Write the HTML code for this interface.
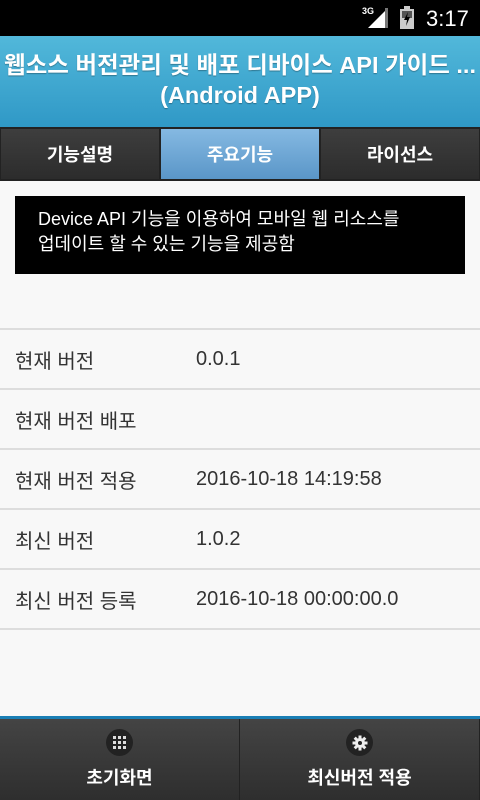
<!DOCTYPE html><html><head><meta charset="utf-8"><style>
*{margin:0;padding:0;box-sizing:border-box}
body{width:480px;height:800px;overflow:hidden;background:#f8f8f8;font-family:"Liberation Sans","Noto Sans CJK KR",sans-serif;position:relative}
.sb{height:36px;background:#000;color:#fff;position:relative}
.hd{position:absolute;top:36px;left:0;width:480px;height:92px;background:linear-gradient(#52b8da,#2f98c6);color:#fff;text-align:center;font-weight:bold;font-size:23.5px;line-height:30px;padding-top:14px;white-space:nowrap;text-shadow:0 1px 1px rgba(0,0,0,.3)}
.tabs{position:absolute;top:127px;left:0;width:480px;height:54px;background:#222;display:flex;padding:2px 0 2px 0}
.tab{flex:1;display:flex;align-items:center;justify-content:center;color:#fff;font-weight:bold;font-size:18px;background:linear-gradient(#3e3e3e,#2c2c2c);margin:0 1px}
.tab.a{background:linear-gradient(#85b9e2,#5a96c8);color:#fff}
.box{position:absolute;top:196px;left:15px;width:450px;height:78px;background:#000;color:#fff;font-size:18px;line-height:25px;padding:11px 23px}
.rows{position:absolute;top:328px;left:0;width:480px;border-top:2px solid #ddd}
.row{height:60px;border-bottom:2px solid #ddd;display:flex;align-items:center;font-size:20px;color:#333}
.row span:first-child{width:196px;padding-left:15px}
.ft{position:absolute;top:716px;left:0;width:480px;height:84px;border-top:3px solid #1a7fb5;background:#222;display:flex}
.fb{flex:1;background:linear-gradient(#444,#2e2e2e);margin-right:1px;display:flex;flex-direction:column;align-items:center;color:#fff;font-weight:bold;font-size:18px}
.ic{width:27px;height:27px;border-radius:50%;background:#222;margin-top:10px;margin-bottom:8px;display:flex;align-items:center;justify-content:center}
</style></head><body>
<div class="sb">
<span style="position:absolute;left:362px;top:6px;font-size:9px;font-weight:bold">3G</span>
<svg style="position:absolute;left:368px;top:8px" width="20" height="20"><polygon points="20,0 20,20 0,20" fill="#fff"/><rect x="17" y="0" width="3" height="20" fill="#777"/></svg>
<svg style="position:absolute;left:400px;top:6px" width="14" height="23"><rect x="4" y="0" width="6" height="3" fill="#ccc"/><rect x="0" y="3" width="14" height="20" fill="#ccc"/><rect x="2" y="5" width="10" height="7" fill="#555"/><polygon points="8,6 4,14 7,14 6,20 10,11 7,11" fill="#000"/></svg>
<span style="position:absolute;left:426px;top:6px;font-size:22px">3:17</span>
</div>
<div class="hd">웹소스 버전관리 및 배포 디바이스 API 가이드 ...<br>(Android APP)</div>
<div class="tabs"><div class="tab">기능설명</div><div class="tab a">주요기능</div><div class="tab">라이선스</div></div>
<div class="box">Device API 기능을 이용하여 모바일 웹 리소스를<br>업데이트 할 수 있는 기능을 제공함</div>
<div class="rows">
<div class="row"><span>현재 버전</span><span>0.0.1</span></div>
<div class="row"><span>현재 버전 배포</span><span></span></div>
<div class="row"><span>현재 버전 적용</span><span>2016-10-18 14:19:58</span></div>
<div class="row"><span>최신 버전</span><span>1.0.2</span></div>
<div class="row"><span>최신 버전 등록</span><span>2016-10-18 00:00:00.0</span></div>
</div>
<div class="ft">
<div class="fb"><div class="ic"><svg width="13" height="13" fill="#ddd"><rect x="0" y="0" width="3" height="3"/><rect x="5" y="0" width="3" height="3"/><rect x="10" y="0" width="3" height="3"/><rect x="0" y="5" width="3" height="3"/><rect x="5" y="5" width="3" height="3"/><rect x="10" y="5" width="3" height="3"/><rect x="0" y="10" width="3" height="3"/><rect x="5" y="10" width="3" height="3"/><rect x="10" y="10" width="3" height="3"/></svg></div>초기화면</div>
<div class="fb"><div class="ic"><svg width="16" height="16" viewBox="0 0 16 16"><g fill="#eee"><circle cx="8" cy="8" r="5"/><rect x="6.5" y="0.5" width="3" height="15"/><rect x="0.5" y="6.5" width="15" height="3"/><rect x="6.5" y="0.5" width="3" height="15" transform="rotate(45 8 8)"/><rect x="6.5" y="0.5" width="3" height="15" transform="rotate(-45 8 8)"/></g><circle cx="8" cy="8" r="2" fill="#222"/></svg></div>최신버전 적용</div>
</div>
</body></html>
